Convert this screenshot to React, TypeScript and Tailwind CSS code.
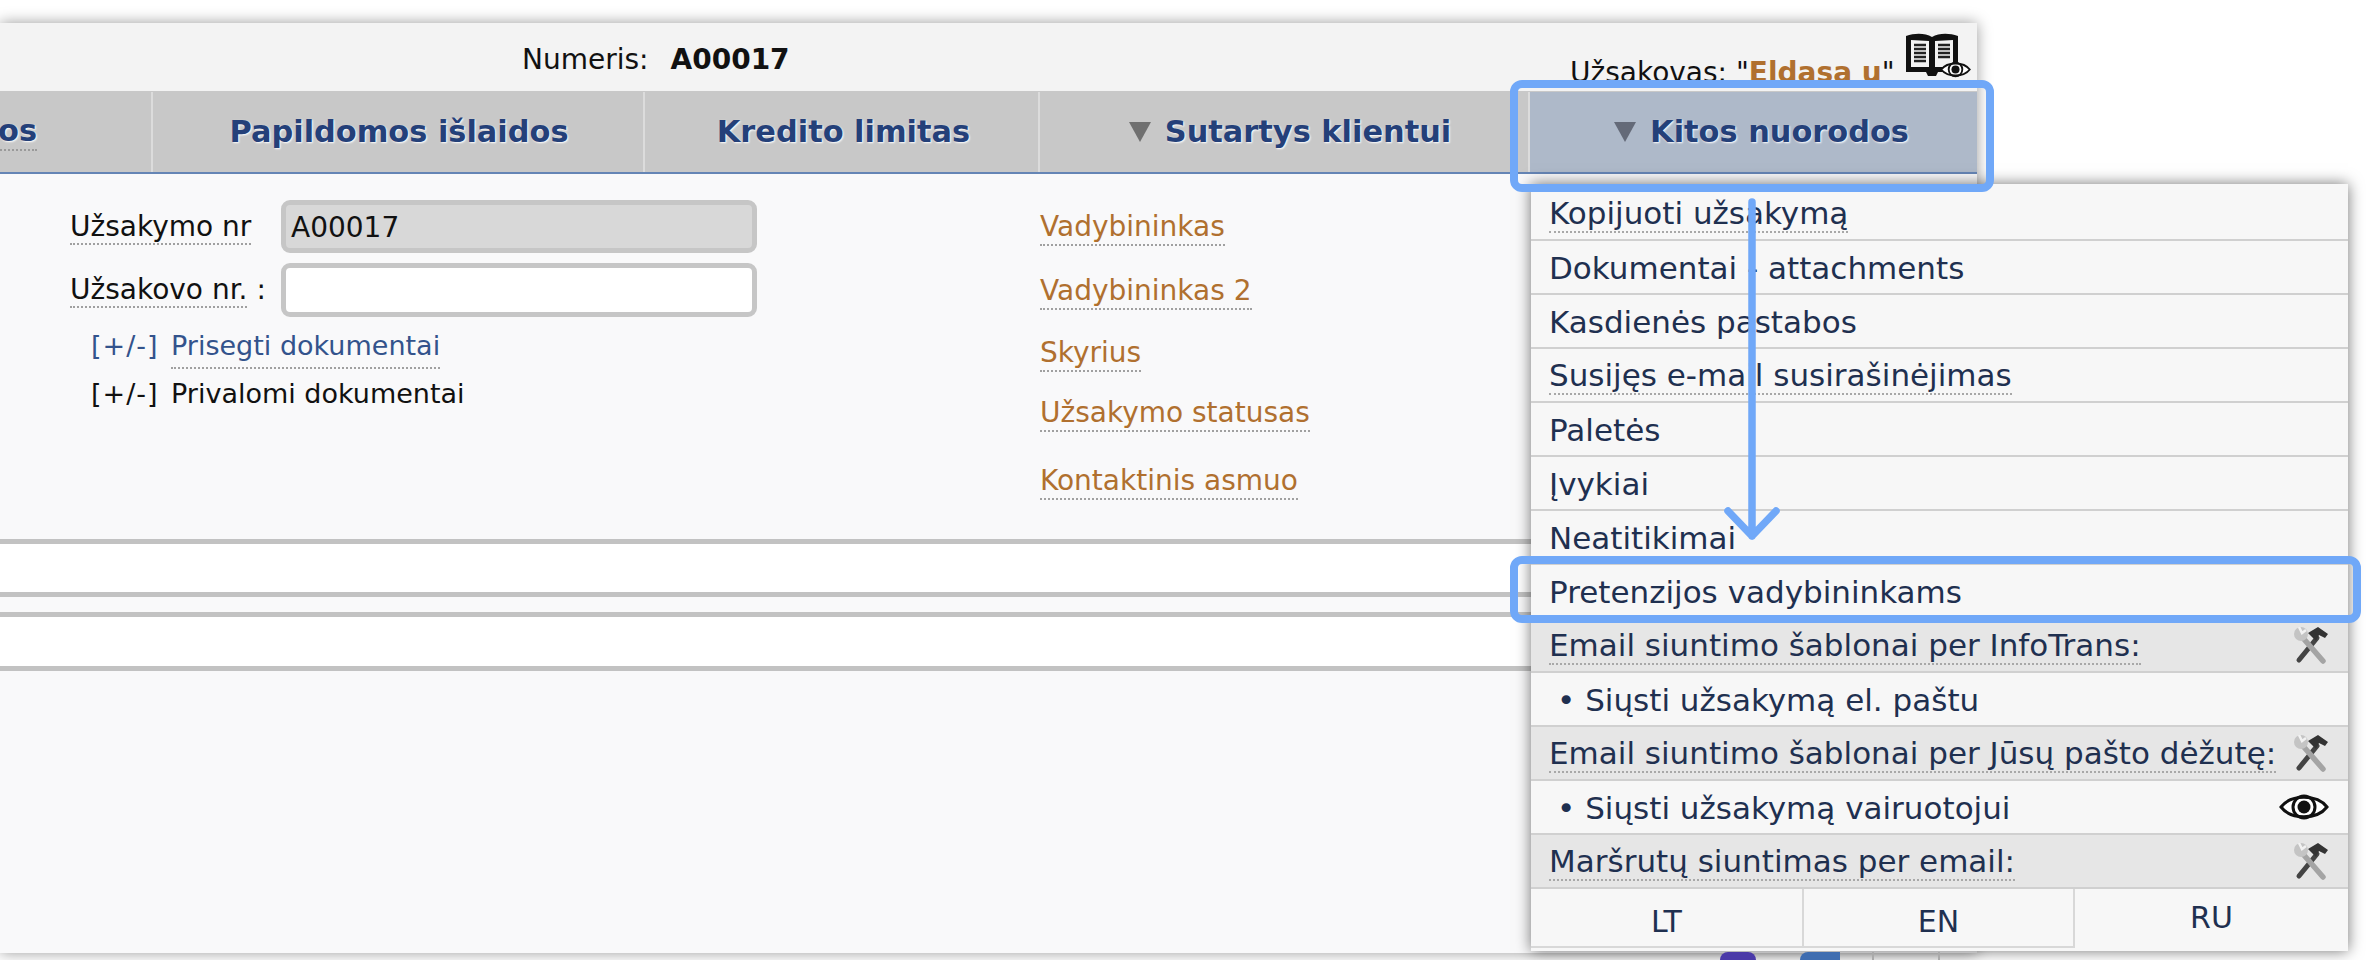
const FONT = "font-['DejaVu_Sans',Verdana,sans-serif]";

const tabs = [
  { label: 'Papildomos išlaidos', width: 'w-[492px] pl-[2px]' },
  { label: 'Kredito limitas', width: 'w-[395px] pl-[4px]' },
  { label: 'Sutartys klientui', width: 'w-[490px] pl-[12px]', arrow: true },
];

const rows = [
  { label: 'Kopijuoti užsakymą', dotted: true },
  { label: 'Dokumentai - attachments' },
  { label: 'Kasdienės pastabos' },
  { label: 'Susijęs e-mail susirašinėjimas', dotted: true },
  { label: 'Paletės' },
  { label: 'Įvykiai' },
  { label: 'Neatitikimai' },
  { label: 'Pretenzijos vadybininkams' },
];

function Tools() {
  return (
    <svg width="34" height="37" viewBox="0 0 34 37" className="shrink-0">
      <path d="M23 11 L5 33" stroke="#444" strokeWidth="5" strokeLinecap="round" />
      <path d="M14 6 L24 0 L34 7 L31 11 L25 8 L22 14 Z" fill="#333" />
      <path d="M9 11 L29 34" stroke="#a4a4a4" strokeWidth="5.5" strokeLinecap="round" />
      <circle cx="7" cy="7" r="7" fill="#c4c4c4" />
      <path d="M5 0 L8 6 L12 3" stroke="#f2f2f2" strokeWidth="2.5" fill="none" />
    </svg>
  );
}

function Eye({ w = 50, h = 30 }: { w?: number; h?: number }) {
  return (
    <svg width={w} height={h} viewBox="0 0 50 30" className="shrink-0">
      <path d="M2 15 C12 2 38 2 48 15 C38 28 12 28 2 15 Z" fill="#fff" stroke="#111" strokeWidth="3" />
      <circle cx="25" cy="15" r="11" fill="none" stroke="#111" strokeWidth="3" />
      <circle cx="25" cy="15" r="6.5" fill="#111" />
    </svg>
  );
}

function Book() {
  return (
    <div className="relative ml-[10px] mt-[10px] h-[46px] w-[66px] shrink-0">
      <svg width="54" height="44" viewBox="0 0 54 44">
        <path d="M1 3 C10 0 20 0 27 4 C34 0 44 0 53 3 L53 39 L33 39 L31 43 L23 43 L21 39 L1 39 Z" fill="#111" />
        <path d="M6 7 L24 8 L24 34 L6 34 Z M30 8 L48 7 L48 34 L30 34 Z" fill="#f3f3f3" />
        <path d="M9 12 H21 M9 16 H21 M9 20 H21 M9 24 H21 M9 28 H21 M33 12 H45 M33 16 H45 M33 20 H45 M33 24 H45" stroke="#222" strokeWidth="2.5" />
      </svg>
      <div className="absolute left-[35px] top-[27px] flex">
        <Eye w={31} h={19} />
      </div>
    </div>
  );
}

function MenuGroup({ label }: { label: string }) {
  return (
    <div className="flex h-[54px] items-center justify-between border-b-2 border-[#d0d0d0] bg-[#e6e6e6] pl-[18px] pr-[20px]">
      <span className="mt-[2px] border-b-2 border-dotted border-[#a8a8a8] leading-[36px]">{label}</span>
      <Tools />
    </div>
  );
}

export default function App() {
  return (
    <div className={`${FONT} relative h-[960px] w-[2366px] overflow-hidden bg-white text-[28px] text-[#111]`}>
      <div className="pt-[23px]">
        <div className="flex h-[930px] w-[1977px] flex-col bg-[#f9f9fa] shadow-[0_0_14px_rgba(0,0,0,0.4)]">
          {/* Top line */}
          <div className="flex h-[68px] bg-[#f3f3f3]">
            <div className="flex w-[1570px] justify-start pl-[522px] pt-[19px] leading-[36px]">
              <span>Numeris:</span>
              <span className="ml-[22px] font-bold">A00017</span>
            </div>
            <div className="flex">
              <span className="mt-[32px] whitespace-nowrap leading-[36px]">
                Užsakovas: "<b className="text-[#b0702f]">Eldasa u</b>"
              </span>
              <Book />
            </div>
          </div>

          {/* Tabs */}
          <div className="flex h-[83px] border-b-2 border-[#6585b5] bg-[#c8c8c8] pt-[1px] text-[30.4px] font-bold text-[#244079] [text-shadow:1px_1px_2px_#fff]">
            <div className="flex w-[153px] items-center justify-end overflow-hidden whitespace-nowrap border-r-2 border-[#dcdcdc] pr-[114px]">
              <span className="border-b-2 border-dotted border-[#9a9a9a] leading-[36px]">Pastabos</span>
            </div>
            {tabs.map(t => (
              <div key={t.label} className={`${t.width} flex items-center justify-center gap-[14px] border-r-2 border-[#dcdcdc]`}>
                {t.arrow && <span className="h-0 w-0 border-x-[11px] border-t-[20px] border-x-transparent border-t-[#707070]" />}
                <span>{t.label}</span>
              </div>
            ))}
            <div className="flex flex-1 items-center justify-center gap-[14px] bg-[#aeb9c9] pl-[16px]">
              <span className="h-0 w-0 border-x-[11px] border-t-[20px] border-x-transparent border-t-[#646a78]" />
              <span>Kitos nuorodos</span>
            </div>
          </div>

          {/* Form */}
          <div className="flex h-[365px] pl-[70px] pt-[26px]">
            <div className="w-[970px]">
              <div className="flex items-center">
                <span className="w-[211px]">
                  <span className="border-b-2 border-dotted border-[#a0a0a0]">Užsakymo nr</span>
                </span>
                <div className="flex h-[53px] w-[476px] items-center rounded-[9px] border-[5px] border-[#c6c6c6] bg-[#d8d8d8] pl-[5px] pt-[2px]">A00017</div>
              </div>
              <div className="mt-[10px] flex items-center">
                <span className="w-[211px]">
                  <span className="border-b-2 border-dotted border-[#a0a0a0]">Užsakovo nr.</span> :
                </span>
                <div className="h-[54px] w-[476px] rounded-[9px] border-[5px] border-[#c6c6c6] bg-white" />
              </div>
              <div className="ml-[21px] mt-[9px] flex text-[27px] text-[#33538c]">
                <span className="w-[80px] tracking-[1px]">[+/-]</span>
                <span className="border-b-2 border-dotted border-[#a0a0a0]">Prisegti dokumentai</span>
              </div>
              <div className="ml-[21px] mt-[5px] flex text-[27px]">
                <span className="w-[80px] tracking-[1px]">[+/-]</span>
                <span>Privalomi dokumentai</span>
              </div>
            </div>
            <div className="flex flex-col items-start leading-[34px] text-[#b0702f]">
              <span className="mt-[10px] border-b-2 border-dotted border-[#a0a0a0]">Vadybininkas</span>
              <span className="mt-[28px] border-b-2 border-dotted border-[#a0a0a0]">Vadybininkas 2</span>
              <span className="mt-[26px] border-b-2 border-dotted border-[#a0a0a0]">Skyrius</span>
              <span className="mt-[24px] border-b-2 border-dotted border-[#a0a0a0]">Užsakymo statusas</span>
              <span className="mt-[32px] border-b-2 border-dotted border-[#a0a0a0]">Kontaktinis asmuo</span>
            </div>
          </div>

          {/* Empty sections */}
          <div className="h-[58px] border-y-[5px] border-[#c2c2c2] bg-white" />
          <div className="h-[15px]" />
          <div className="h-[59px] border-y-[5px] border-[#c2c2c2] bg-white" />
        </div>
      </div>

      {/* Opened menu */}
      <div className="absolute left-[1531px] top-[184px] w-[817px] bg-[#f7f7f7] pt-[3px] text-[31px] text-[#1f3050] shadow-[0_0_14px_rgba(0,0,0,0.55)]">
        {rows.map(r => (
          <div key={r.label} className="flex h-[54px] items-center border-b-2 border-[#d0d0d0] pl-[18px]">
            <span className={r.dotted ? 'mt-[2px] border-b-2 border-dotted border-[#a8a8a8] leading-[36px]' : 'mt-[2px]'}>{r.label}</span>
          </div>
        ))}
        <MenuGroup label="Email siuntimo šablonai per InfoTrans:" />
        <div className="flex h-[54px] items-center border-b-2 border-[#d0d0d0] pl-[26px]">
          <span className="mt-[2px]">• Siųsti užsakymą el. paštu</span>
        </div>
        <MenuGroup label="Email siuntimo šablonai per Jūsų pašto dėžutę:" />
        <div className="flex h-[54px] items-center justify-between border-b-2 border-[#d0d0d0] pl-[26px] pr-[19px]">
          <span className="mt-[2px]">• Siųsti užsakymą vairuotojui</span>
          <Eye />
        </div>
        <MenuGroup label="Maršrutų siuntimas per email:" />
        <div className="flex h-[62px] text-[30px]">
          <div className="mb-[3px] flex w-[273px] items-center justify-center border-b-2 border-r-2 border-[#d8d8d8] pt-[8px]">LT</div>
          <div className="mb-[3px] flex w-[271px] items-center justify-center border-b-2 border-r-2 border-[#d8d8d8] pt-[8px]">EN</div>
          <div className="flex flex-1 items-center justify-center pb-[6px]">RU</div>
        </div>
      </div>

      {/* Toolbar icons peeking out under the menu */}
      <div className="absolute left-[1720px] top-[952px] flex items-start">
        <span className="h-[8px] w-[36px] rounded-t-[12px] bg-[#4b3aa8]" />
        <span className="ml-[44px] h-[8px] w-[40px] rounded-tl-[20px] bg-[#3f6db0]" />
        <span className="ml-[32px] h-[8px] w-[68px] border-x-2 border-[#aaa]" />
      </div>

      {/* Blue annotations */}
      <div className="absolute left-[1510px] top-[80px] h-[112px] w-[484px] rounded-[12px] border-[8px] border-[#70a8f8]" />
      <div className="absolute left-[1510px] top-[556px] h-[67px] w-[851px] rounded-[12px] border-[8px] border-[#70a8f8]" />
      <svg className="absolute left-[1720px] top-[198px]" width="64" height="345" viewBox="0 0 64 345">
        <path d="M32 4 V338 M8 313 L32 338 L56 313" fill="none" stroke="#70a8f8" strokeWidth="7.5" strokeLinecap="round" strokeLinejoin="round" />
      </svg>
    </div>
  );
}
